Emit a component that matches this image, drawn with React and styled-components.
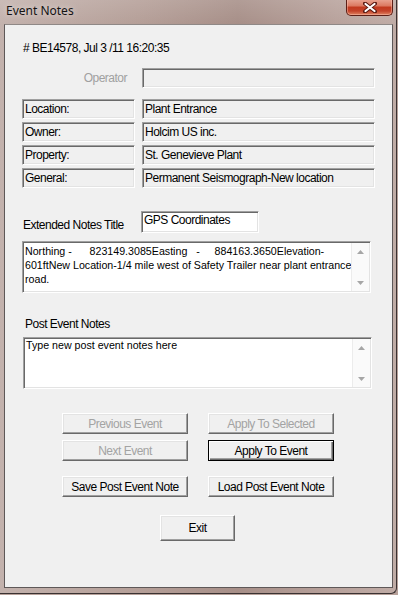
import React from "react";
import styled, { createGlobalStyle, css } from "styled-components";

const Global = createGlobalStyle`
  html, body { margin: 0; padding: 0; }
  body {
    background: #b7a19a;
    font-family: "Liberation Sans", Arial, sans-serif;
    overflow: hidden;
  }
`;

const Window = styled.div`
  width: 397px;
  height: 594px;
  box-sizing: border-box;
  display: flex;
  flex-direction: column;
  background: linear-gradient(90deg, #c3b2ad 0%, #b59f98 35%, #a78f88 60%, #b8a29c 85%, #c0aca6 100%);
  border-right: 1px solid #3a3232;
  border-bottom: 1px solid #3a3232;
  border-bottom-right-radius: 6px;
`;

const TitleBar = styled.div`
  height: 24px;
  display: flex;
  justify-content: space-between;
  align-items: flex-start;
  padding: 0 3px 0 6px;
  background: linear-gradient(180deg, rgba(255,255,255,0.12), rgba(255,255,255,0));
`;

const Title = styled.div`
  margin-top: 3px;
  font-family: "Noto Sans", "Liberation Sans", sans-serif;
  font-size: 12px;
  line-height: 16px;
  color: #141414;
  text-shadow: 0 0 6px rgba(255, 255, 255, 0.7);
`;

const CloseBtn = styled.div`
  width: 47px;
  height: 17px;
  margin-top: -1px;
  box-sizing: border-box;
  border: 1px solid #5d1f16;
  border-top: none;
  border-radius: 0 0 5px 5px;
  background: linear-gradient(180deg, #eaa896 0%, #dc7a62 42%, #c23a1f 52%, #c4432a 75%, #df8463 100%);
  box-shadow: inset 0 0 0 1px rgba(255, 200, 185, 0.45);
  display: flex;
  align-items: center;
  justify-content: center;
`;

const Frame = styled.div`
  flex: 1;
  display: flex;
  padding: 0 3px 5px 4px;
`;

const Client = styled.div`
  flex: 1;
  display: flex;
  flex-direction: column;
  background: #f0f0f0;
  border: 1px solid #5e5858;
  border-top-color: #8f8886;
`;

const uiText = css`
  font-family: "Liberation Sans", Arial, sans-serif;
  font-size: 12px;
  letter-spacing: -0.5px;
  line-height: 14px;
`;

const sunken = css`
  box-sizing: border-box;
  border: 1px solid;
  border-color: #a0a0a0 #ffffff #ffffff #a0a0a0;
  box-shadow: inset 1px 1px 0 #696969, inset -1px -1px 0 #e3e3e3;
`;

const Header = styled.div`
  ${uiText};
  margin: 16px 0 0 18px;
  color: #000;
`;

const FieldGrid = styled.div`
  display: grid;
  grid-template-columns: 113px 233px;
  column-gap: 7px;
  row-gap: 3px;
  margin: ${(p) => p.$top}px 0 0 17px;
`;

const OperatorLabel = styled.div`
  ${uiText};
  color: #a0a0a0;
  text-align: right;
  padding-right: 8px;
  align-self: center;
`;

const Box = styled.div`
  ${sunken};
  ${uiText};
  height: 20px;
  padding: 0 2px;
  display: flex;
  align-items: center;
  background: #f0f0f0;
  color: #000;
  white-space: nowrap;
`;

const TitleRow = styled.div`
  display: flex;
  align-items: flex-end;
  margin: 23px 0 0 18px;
`;

const TitleLabel = styled.div`
  ${uiText};
  width: 118px;
  margin-bottom: 1px;
  color: #000;
`;

const TitleInput = styled.div`
  ${sunken};
  ${uiText};
  width: 118px;
  height: 22px;
  padding: 1px 2px;
  background: #fff;
  color: #000;
`;

const Memo = styled.div`
  ${sunken};
  width: 349px;
  height: 52px;
  margin: ${(p) => p.$top}px 0 0 ${(p) => p.$left}px;
  background: #fff;
  display: flex;
`;

const MemoText = styled.div`
  flex: 1;
  padding: ${(p) => p.$padTop}px 0 0 2px;
  font-family: "Liberation Sans", Arial, sans-serif;
  font-size: 10.67px;
  line-height: 14px;
  color: #000;
  white-space: pre;
  overflow: hidden;
`;

const ScrollBar = styled.div`
  width: 17px;
  display: flex;
  flex-direction: column;
  justify-content: space-between;
  background: #fafafa;
  border-left: 1px solid #ececec;
  margin: 1px 1px 1px 0;
`;

const ArrowCell = styled.div`
  height: 17px;
  display: flex;
  align-items: center;
  justify-content: center;
`;

const SectionLabel = styled.div`
  ${uiText};
  margin: 24px 0 0 20px;
  color: #000;
`;

const ButtonGrid = styled.div`
  display: grid;
  grid-template-columns: 126px 126px;
  column-gap: 20px;
  row-gap: 6px;
  margin: ${(p) => p.$top}px 0 0 57px;
`;

const Button = styled.button`
  ${uiText};
  box-sizing: border-box;
  width: ${(p) => p.$w || 126}px;
  height: ${(p) => p.$h || 21}px;
  padding: 0;
  background: #f0f0f0;
  color: ${(p) => (p.disabled ? "#a3a3a3" : "#000")};
  border: 1px solid;
  border-color: #ffffff #696969 #696969 #ffffff;
  box-shadow: inset -1px -1px 0 #a0a0a0, inset 1px 1px 0 #e3e3e3;
  ${(p) =>
    p.$default &&
    css`
      border-color: #000;
      box-shadow: inset 1px 1px 0 #fff, inset -1px -1px 0 #696969, inset -2px -2px 0 #a0a0a0;
    `}
`;

const ExitButton = styled(Button)`
  margin: 18px 0 0 155px;
`;

const Up = () => (
  <svg width="7" height="4" viewBox="0 0 7 4">
    <path d="M0 4 L3.5 0 L7 4 Z" fill="#a6a6a6" />
  </svg>
);
const Down = () => (
  <svg width="7" height="4" viewBox="0 0 7 4">
    <path d="M0 0 L3.5 4 L7 0 Z" fill="#a6a6a6" />
  </svg>
);

const Scroll = () => (
  <ScrollBar>
    <ArrowCell><Up /></ArrowCell>
    <ArrowCell><Down /></ArrowCell>
  </ScrollBar>
);

const rows = [
  ["Location:", "Plant Entrance"],
  ["Owner:", "Holcim US inc."],
  ["Property:", "St. Genevieve Plant"],
  ["General:", "Permanent Seismograph-New location"],
];

const noteText =
  "Northing -      823149.3085Easting   -     884163.3650Elevation-\n" +
  "601ftNew Location-1/4 mile west of Safety Trailer near plant entrance\n" +
  "road.";

export default function App() {
  return (
    <>
      <Global />
      <Window>
        <TitleBar>
          <Title>Event Notes</Title>
          <CloseBtn>
            <svg width="14" height="11" viewBox="0 0 14 11">
              <path d="M2 1.5 L12 9.5 M12 1.5 L2 9.5" stroke="#5a1a12" strokeWidth="4" strokeLinecap="round" />
              <path d="M2.5 2 L11.5 9 M11.5 2 L2.5 9" stroke="#ffffff" strokeWidth="2.2" strokeLinecap="round" />
            </svg>
          </CloseBtn>
        </TitleBar>
        <Frame>
          <Client>
            <Header># BE14578, Jul 3 /11 16:20:35</Header>

            <FieldGrid $top={13}>
              <OperatorLabel>Operator</OperatorLabel>
              <Box />
            </FieldGrid>

            <FieldGrid $top={11}>
              {rows.map(([k, v]) => (
                <React.Fragment key={k}>
                  <Box>{k}</Box>
                  <Box>{v}</Box>
                </React.Fragment>
              ))}
            </FieldGrid>

            <TitleRow>
              <TitleLabel>Extended Notes Title</TitleLabel>
              <TitleInput>GPS Coordinates</TitleInput>
            </TitleRow>

            <Memo $top={8} $left={17}>
              <MemoText $padTop={2}>{noteText}</MemoText>
              <Scroll />
            </Memo>

            <SectionLabel>Post Event Notes</SectionLabel>
            <Memo $top={6} $left={18}>
              <MemoText $padTop={0}>Type new post event notes here</MemoText>
              <Scroll />
            </Memo>

            <ButtonGrid $top={24}>
              <Button disabled>Previous Event</Button>
              <Button disabled>Apply To Selected</Button>
              <Button disabled>Next Event</Button>
              <Button $default>Apply To Event</Button>
            </ButtonGrid>
            <ButtonGrid $top={15}>
              <Button>Save Post Event Note</Button>
              <Button>Load Post Event Note</Button>
            </ButtonGrid>

            <ExitButton $w={75} $h={26}>Exit</ExitButton>
          </Client>
        </Frame>
      </Window>
    </>
  );
}
